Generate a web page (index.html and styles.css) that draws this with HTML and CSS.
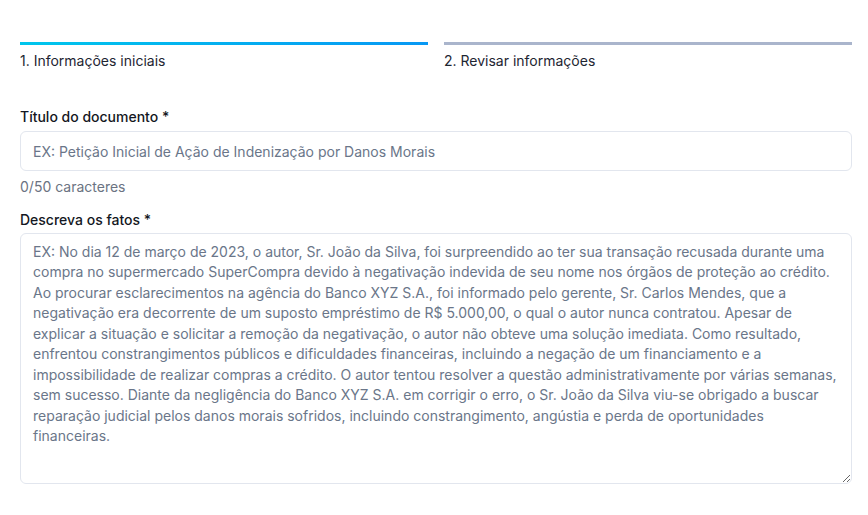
FILE: index.html
```html
<!DOCTYPE html>
<html lang="pt-BR">
<head>
<meta charset="utf-8">
<title>Nova petição</title>
<link rel="stylesheet" href="styles.css">
</head>
<body>
<main class="page">
  <div class="steps">
    <div class="step step-active">
      <div class="step-bar"></div>
      <div class="step-label">1. Informações iniciais</div>
    </div>
    <div class="step">
      <div class="step-bar"></div>
      <div class="step-label">2. Revisar informações</div>
    </div>
  </div>

  <form class="form">
    <div class="field field-title">
      <label class="label" for="titulo">Título do documento *</label>
      <input class="input" id="titulo" type="text" placeholder="EX: Petição Inicial de Ação de Indenização por Danos Morais">
      <div class="counter">0/50 caracteres</div>
    </div>
    <div class="field field-facts">
      <label class="label" for="fatos">Descreva os fatos *</label>
      <textarea class="textarea" id="fatos" placeholder="EX: No dia 12 de março de 2023, o autor, Sr. João da Silva, foi surpreendido ao ter sua transação recusada durante uma compra no supermercado SuperCompra devido à negativação indevida de seu nome nos órgãos de proteção ao crédito. Ao procurar esclarecimentos na agência do Banco XYZ S.A., foi informado pelo gerente, Sr. Carlos Mendes, que a negativação era decorrente de um suposto empréstimo de R$ 5.000,00, o qual o autor nunca contratou. Apesar de explicar a situação e solicitar a remoção da negativação, o autor não obteve uma solução imediata. Como resultado, enfrentou constrangimentos públicos e dificuldades financeiras, incluindo a negação de um financiamento e a impossibilidade de realizar compras a crédito. O autor tentou resolver a questão administrativamente por várias semanas, sem sucesso. Diante da negligência do Banco XYZ S.A. em corrigir o erro, o Sr. João da Silva viu-se obrigado a buscar reparação judicial pelos danos morais sofridos, incluindo constrangimento, angústia e perda de oportunidades financeiras."></textarea>
    </div>
  </form>
</main>
</body>
</html>
```

FILE: styles.css
```css
* { box-sizing: border-box; }

html, body {
  margin: 0;
  background: #ffffff;
}

body {
  font-family: Inter, "Noto Sans", "Liberation Sans", sans-serif;
  font-size: 14px;
  line-height: 20px;
  color: #1e2532;
}

.page {
  width: 832px;
  margin-left: 20px;
  padding-top: 42px;
}

.steps {
  display: flex;
  gap: 16px;
}

.step {
  flex: 1;
}

.step-bar {
  height: 3px;
  background: #aab5cc;
}

.step-active .step-bar {
  background: linear-gradient(90deg, #00c6ec 0%, #0798f4 100%);
}

.step-label {
  margin-top: 6px;
  color: #1e2532;
}

.form {
  margin-top: 36px;
  display: flex;
  flex-direction: column;
}

.field {
  display: flex;
  flex-direction: column;
}

.label {
  font-weight: 500;
  color: #131722;
  margin-bottom: 4px;
}

.input,
.textarea {
  width: 100%;
  font-family: inherit;
  font-size: 14px;
  color: #1e2532;
  background: #fff;
  border: 1px solid #e2e6ee;
  border-radius: 6px;
  outline: none;
}

.input {
  height: 40px;
  padding: 0 12px;
}

.input::placeholder,
.textarea::placeholder {
  color: #6a7689;
  opacity: 1;
}

.counter {
  margin-top: 6px;
  color: #6b7382;
}

.field-facts {
  margin-top: 13px;
}

.field-facts .label {
  margin-bottom: 3px;
}

.textarea {
  height: 251px;
  padding: 8px 12px;
  line-height: 20.44px;
  resize: vertical;
  display: block;
}
```
